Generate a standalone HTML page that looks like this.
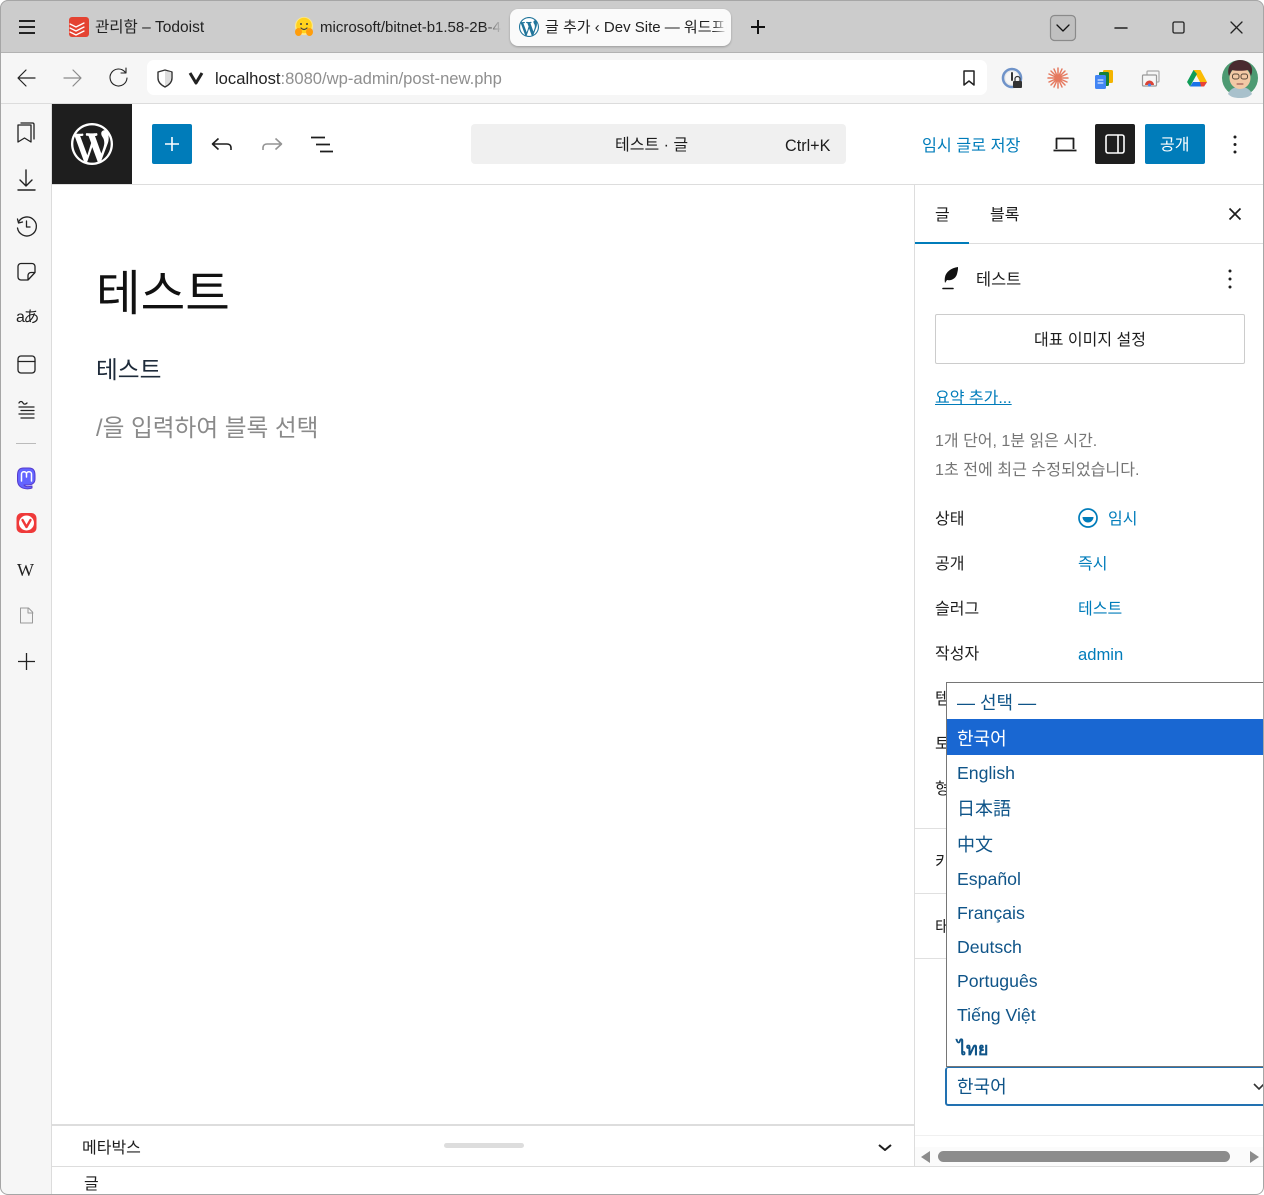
<!DOCTYPE html>
<html lang="ko"><head><meta charset="utf-8"><title>글 추가</title>
<style>
html,body{margin:0;padding:0;width:1264px;height:1195px;overflow:hidden;background:#fff}
body{position:relative;font-family:"Liberation Sans","Noto Sans CJK KR",sans-serif;color:#1e1e1e;font-size:16px}
.b{position:absolute}
.t{position:absolute;white-space:nowrap;line-height:20px;height:20px}
.blue{color:#007cba}
svg.i{position:absolute;left:0;top:0;width:1264px;height:1195px}
.o{position:absolute;left:10px;white-space:nowrap;line-height:20px;font-size:18px;color:#0f5488}
.l{font-size:17.700px}
</style></head><body>
<!-- chrome -->
<div class="b" style="left:0;top:0;width:1264px;height:52px;background:#ccc"></div>
<div class="b" style="left:0;top:52px;width:1264px;height:1px;background:#b2b2b2"></div>
<div class="b" style="left:0;top:53px;width:1264px;height:50px;background:#f6f6f6"></div>
<div class="b" style="left:0;top:103px;width:1264px;height:1px;background:#dcdcdc"></div>
<div class="b" style="left:147px;top:60px;width:840px;height:35px;background:#fff;border-radius:7px"></div>
<div class="b" style="left:510px;top:9px;width:221px;height:37px;background:#fafafa;border-radius:8px;box-shadow:0 1px 2px rgba(0,0,0,.25)"></div>
<!-- left panel -->
<div class="b" style="left:0;top:104px;width:51px;height:1091px;background:#f6f6f6"></div>
<div class="b" style="left:51px;top:104px;width:1px;height:1091px;background:#dcdcdc"></div>
<div class="b" style="left:16px;top:443px;width:20px;height:1px;background:#bbb"></div>
<!-- WP header -->
<div class="b" style="left:52px;top:104px;width:80px;height:80px;background:#1e1e1e"></div>
<div class="b" style="left:52px;top:184px;width:1212px;height:1px;background:#ddd"></div>
<div class="b" style="left:152px;top:124px;width:40px;height:40px;background:#007cba;border-radius:2px"></div>
<div class="b" style="left:471px;top:124px;width:375px;height:40px;background:#f0f0f0;border-radius:4px"></div>
<div class="b" style="left:1095px;top:124px;width:40px;height:40px;background:#1e1e1e;border-radius:2px"></div>
<div class="b" style="left:1145px;top:124px;width:60px;height:40px;background:#007cba;border-radius:2px"></div>
<!-- sidebar lines -->
<div class="b" style="left:914px;top:185px;width:1px;height:981px;background:#ddd"></div>
<div class="b" style="left:915px;top:243px;width:349px;height:1px;background:#ddd"></div>
<div class="b" style="left:915px;top:242px;width:54px;height:2px;background:#007cba"></div>
<div class="b" style="left:935px;top:314px;width:308px;height:48px;border:1px solid #ccc;border-radius:2px"></div>
<div class="b" style="left:915px;top:828px;width:349px;height:1px;background:#e0e0e0"></div>
<div class="b" style="left:915px;top:893px;width:349px;height:1px;background:#e0e0e0"></div>
<div class="b" style="left:915px;top:958px;width:349px;height:1px;background:#e0e0e0"></div>
<div class="b" style="left:915px;top:1135px;width:349px;height:1px;background:#f0f0f0"></div>
<div class="b" style="left:915px;top:1147px;width:349px;height:19px;background:#fbfbfb"></div>
<div class="b" style="left:938px;top:1151px;width:292px;height:11px;background:#8c8c8c;border-radius:6px"></div>
<!-- bottom -->
<div class="b" style="left:52px;top:1124px;width:862px;height:2px;background:#ddd"></div>
<div class="b" style="left:52px;top:1166px;width:1212px;height:1px;background:#ddd"></div>
<div class="b" style="left:444px;top:1143px;width:80px;height:5px;background:#ddd;border-radius:3px"></div>

<svg class="i" viewBox="0 0 1264 1195" xmlns="http://www.w3.org/2000/svg" fill="none" stroke-linecap="round" stroke-linejoin="round">
<!-- hamburger -->
<path d="M19 21h16M19 27h16M19 33h16" stroke="#222" stroke-width="2" stroke-linecap="butt"/>
<!-- todoist -->
<rect x="69" y="17" width="20" height="20" rx="3" fill="#e44332"/>
<path d="M70 24l6 3 8-4M70 28l6 3 8-4M70 32l6 3 8-4" stroke="#fff" stroke-width="1.300"/>
<!-- hugging face -->
<circle cx="304" cy="26" r="9" fill="#ffe98a"/>
<circle cx="304" cy="25.500" r="7.800" fill="#ffd21e"/>
<ellipse cx="298.500" cy="32" rx="3.500" ry="4" fill="#ff9d0b"/><ellipse cx="309.500" cy="32" rx="3.500" ry="4" fill="#ff9d0b"/>
<circle cx="301" cy="24" r="1" fill="#3a3b45"/><circle cx="307" cy="24" r="1" fill="#3a3b45"/>
<path d="M301 28c2 2 4 2 6 0" stroke="#3a3b45" stroke-width="1.200"/>
<!-- wp favicon -->
<g transform="translate(519 17)"><circle cx="10" cy="10" r="10" fill="#fff"/><path fill="#21759b" d="M20 10c0-5.510-4.490-10-10-10C4.480 0 0 4.490 0 10c0 5.520 4.480 10 10 10 5.510 0 10-4.480 10-10zM7.780 15.370L4.370 6.220c.55-.02 1.170-.08 1.170-.08.5-.06.44-1.130-.06-1.110 0 0-1.450.11-2.370.11-.18 0-.37 0-.58-.01C4.120 2.690 6.870 1.110 10 1.110c2.330 0 4.450.87 6.050 2.340-.68-.11-1.650.39-1.650 1.580 0 .74.45 1.360.9 2.100.35.61.55 1.360.55 2.460 0 1.490-1.400 5-1.400 5l-3.030-8.370c.54-.02.82-.17.82-.17.5-.05.44-1.250-.06-1.220 0 0-1.440.12-2.380.12-.87 0-2.330-.12-2.330-.12-.5-.03-.56 1.200-.06 1.220l.92.08 1.260 3.410zM17.410 10c.24-.64.74-1.870.43-4.250.7 1.290 1.050 2.710 1.050 4.250 0 3.290-1.730 6.240-4.400 7.780.97-2.590 1.940-5.200 2.920-7.780zM6.100 18.090C3.120 16.650 1.110 13.530 1.110 10c0-1.300.23-2.480.72-3.590C3.250 10.300 4.670 14.200 6.100 18.090zm4.030-6.630l2.580 6.980c-.86.29-1.760.45-2.710.45-.79 0-1.570-.11-2.290-.33.81-2.380 1.620-4.740 2.420-7.100z"/></g>
<!-- new tab -->
<path d="M758 20v14M751 27h14" stroke="#111" stroke-width="2" stroke-linecap="butt"/>
<!-- tab list -->
<rect x="1050.500" y="15.500" width="25" height="25" rx="4" fill="#c0c0c0" stroke="#8a8a8a" stroke-width="1.200"/>
<path d="M1057 25l6 6 6-6" stroke="#111" stroke-width="1.300"/>
<!-- window buttons -->
<path d="M1115 28h12" stroke="#222" stroke-width="1.500"/>
<rect x="1173" y="22" width="11" height="11" rx="1.500" stroke="#222" stroke-width="1.300"/>
<path d="M1231 22l11 11M1242 22l-11 11" stroke="#222" stroke-width="1.300"/>
<!-- nav -->
<path d="M35 78H19M26 70l-8 8 8 8" stroke="#222" stroke-width="1.200"/>
<path d="M64 78h16M73 70l8 8-8 8" stroke="#8a8a8a" stroke-width="1.200"/>
<path d="M125 72a8.500 8.500 0 1 0 2 6M126 68v5h-5" stroke="#222" stroke-width="1.100"/>
<path d="M165 70l7 2v6c0 4-3 7-7 9-4-2-7-5-7-9v-6z" stroke="#333" stroke-width="1.400"/>
<path d="M165 71v15c3-2 6-4 6-8v-6z" fill="#ddd"/>
<path d="M190 73l6 10 6-10" stroke="#222" stroke-width="3" stroke-linecap="butt"/>
<!-- bookmark -->
<path d="M964 71h10v14l-5-4-5 4z" stroke="#222" stroke-width="1.500"/>
<!-- extension 1password-like -->
<circle cx="1012" cy="78" r="9" stroke="#6f93c9" stroke-width="2.600"/>
<circle cx="1012" cy="78" r="7" stroke="#e8e8e8" stroke-width="1"/>
<path d="M1012 73v7" stroke="#333" stroke-width="2"/>
<rect x="1013" y="81" width="9" height="7" rx="1" fill="#333"/><path d="M1015 81v-2a2.500 2.500 0 0 1 5 0v2" stroke="#333" stroke-width="1.200"/>
<!-- claude star -->
<path d="M1058 68v20M1048 78h20M1051 71l14 14M1065 71l-14 14M1054 69l8 18M1062 69l-8 18M1049 74l18 8M1067 74l-18 8" stroke="#e5795f" stroke-width="1.500"/>
<!-- docs -->
<rect x="1103" y="70" width="10" height="13" rx="1.500" fill="#f4b400"/>
<rect x="1099" y="72" width="10" height="14" rx="1.500" fill="#188038"/>
<rect x="1095" y="75" width="11" height="14" rx="1.500" fill="#4285f4"/>
<path d="M1098 80h5M1098 83h5" stroke="#fff" stroke-width="1"/>
<!-- tab chrome -->
<rect x="1147" y="71" width="12" height="11" rx="1" stroke="#aaa" stroke-width="1.200"/>
<rect x="1142.500" y="75" width="14" height="11" rx="1" fill="#f6f6f6" stroke="#999" stroke-width="1.200"/>
<path d="M1145 85a4.500 4.500 0 0 1 9 0z" fill="#db4437"/><circle cx="1149.500" cy="85" r="1.500" fill="#4285f4"/>
<!-- drive -->
<path d="M1193.500 70h7l6.500 12h-7z" fill="#fbbc04"/><path d="M1193.500 70l-6.500 12 3 4.500 7-12.500z" fill="#0f9d58"/><path d="M1193 82h14l-3 4.500h-14z" fill="#1a73e8"/><path d="M1200 82h7l-3 4.500h-3z" fill="#ea4335"/>
<!-- avatar -->
<circle cx="1240" cy="78" r="18" fill="#4d9a72"/>
<path d="M1228 94c2-5 6-7 12-7s10 2 12 7c-3 3-6 4-12 4s-9-1-12-4z" fill="#a9c1cc"/>
<ellipse cx="1240" cy="78" rx="10.500" ry="11" fill="#f3c9a5"/>
<path d="M1229 76c-3-9 3-16 11-16s15 6 11 16c-1-3-2-5-3-6-5 1-12 1-16 0-1 2-2 4-3 6z" fill="#4a2b2f"/>
<rect x="1232.500" y="74" width="6.500" height="5" rx="2" stroke="#5b4a3a" stroke-width="1"/><rect x="1241" y="74" width="6.500" height="5" rx="2" stroke="#5b4a3a" stroke-width="1"/>
<path d="M1237 84h6" stroke="#844" stroke-width="1"/>
<!-- left panel icons -->
<g stroke="#222" stroke-width="1.300">
<path d="M18 125h13v17l-6.500-4-6.500 4zM21 123h11.500c1 0 1.500.5 1.500 1.500V139"/>
<path d="M26 170v16M20 180l6 6 6-6M18 190h17" stroke-width="1.400"/>
<path d="M18.500 222a9.500 9.500 0 1 1-1 6M17.500 219l1 4 4-1M26.500 221v6h3.500"/>
<path d="M21 263.500h11a3 3 0 0 1 3 3v6l-7 7.500h-7a3 3 0 0 1-3-3v-10.500a3 3 0 0 1 3-3zM35 272.500h-4a3 3 0 0 0-3 3v4.500"/>
<rect x="18" y="356" width="17" height="17" rx="3"/><path d="M18 361.500h17"/>
<path d="M19 403c1-2 3-2 4 0s3 1 4 0M19 407h15M21 410.500h13M19 414h15M21 418h13"/>
</g>
<!-- mastodon -->
<path d="M17.500 475c0-5 2.500-7 6-7h5.500c3.500 0 6 2 6 7v4c0 4-3 6-7 6h-4c1 2 4 2 8 1v2c-3 1.500-14.500 2-14.500-8z" fill="#6364ff" stroke="#563acc" stroke-width="1"/>
<path d="M21.500 481v-7c0-3 5-3 5 0v3M26.500 477v-3c0-3 5-3 5 0v7" stroke="#fff" stroke-width="1.500"/>
<!-- vivaldi -->
<rect x="16.500" y="513" width="20" height="20" rx="5" fill="#ef3939"/>
<circle cx="26.500" cy="523" r="7.500" fill="#fff"/>
<path d="M22.500 520l4 7 4-7" stroke="#ef3939" stroke-width="2.400"/>
<!-- page -->
<path d="M20.500 608h8l4 4v11h-12z" fill="#f4f4f4" stroke="#999" stroke-width="1"/><path d="M28 608v5h5" stroke="#999"/>
<!-- add -->
<path d="M26.500 653v17M18 661.500h17" stroke="#222" stroke-width="1.300" stroke-linecap="butt"/>
<!-- WP logo -->
<g transform="translate(71 123) scale(2.1)"><path fill="#fff" d="M20 10c0-5.510-4.490-10-10-10C4.480 0 0 4.490 0 10c0 5.520 4.480 10 10 10 5.510 0 10-4.480 10-10zM7.780 15.370L4.370 6.220c.55-.02 1.170-.08 1.170-.08.5-.06.44-1.130-.06-1.110 0 0-1.450.11-2.370.11-.18 0-.37 0-.58-.01C4.120 2.690 6.870 1.110 10 1.110c2.330 0 4.450.87 6.050 2.340-.68-.11-1.650.39-1.650 1.580 0 .74.45 1.360.9 2.100.35.61.55 1.360.55 2.460 0 1.490-1.400 5-1.400 5l-3.030-8.370c.54-.02.82-.17.82-.17.5-.05.44-1.250-.06-1.220 0 0-1.440.12-2.380.12-.87 0-2.330-.12-2.330-.12-.5-.03-.56 1.200-.06 1.220l.92.08 1.260 3.410zM17.410 10c.24-.64.74-1.870.43-4.250.7 1.290 1.050 2.710 1.050 4.250 0 3.290-1.730 6.240-4.400 7.780.97-2.590 1.940-5.200 2.920-7.780zM6.100 18.090C3.120 16.650 1.110 13.530 1.110 10c0-1.300.23-2.480.72-3.590C3.250 10.300 4.670 14.200 6.100 18.090zm4.030-6.630l2.580 6.980c-.86.29-1.760.45-2.710.45-.79 0-1.570-.11-2.290-.33.81-2.380 1.620-4.740 2.420-7.100z"/></g>
<!-- header icons -->
<path d="M172 137v14M165 144h14" stroke="#fff" stroke-width="1.600" stroke-linecap="butt"/>
<path d="M231 150v-2c0-3-2-4-4-4h-14M218.500 138.500l-6 5.500 6 5.500" stroke="#1e1e1e" stroke-width="1.600" stroke-linecap="butt"/>
<path d="M263 150v-2c0-3 2-4 4-4h14M275.500 138.500l6 5.500-6 5.500" stroke="#949494" stroke-width="1.600" stroke-linecap="butt"/>
<path d="M311 137.500h14M316 144.500h14M320 151.500h13" stroke="#1e1e1e" stroke-width="1.700" stroke-linecap="butt"/>
<path d="M1056.500 149v-10.500h17V149M1053.500 150.500h23" stroke="#1e1e1e" stroke-width="1.800" stroke-linecap="butt"/>
<rect x="1106" y="135" width="18" height="18" rx="2" stroke="#fff" stroke-width="1.600"/><path d="M1118 135v18" stroke="#fff" stroke-width="1.600" stroke-linecap="butt"/>
<circle cx="1235" cy="137" r="1.500" fill="#1e1e1e"/><circle cx="1235" cy="144.500" r="1.500" fill="#1e1e1e"/><circle cx="1235" cy="152" r="1.500" fill="#1e1e1e"/>
<!-- sidebar icons -->
<path d="M1229.500 208.500l11 11M1240.500 208.500l-11 11" stroke="#1e1e1e" stroke-width="1.700" stroke-linecap="butt"/>
<path d="M958 267c-7 1-12 5-13 10-.4 2-.4 4 0 6l2-3c5 1 9-2 10-6 .6-2.500 1.200-4.500 1-7z" fill="#111"/>
<path d="M943 288.500h10" stroke="#111" stroke-width="1.600"/>
<circle cx="1230" cy="271" r="1.500" fill="#1e1e1e"/><circle cx="1230" cy="279" r="1.500" fill="#1e1e1e"/><circle cx="1230" cy="287" r="1.500" fill="#1e1e1e"/>
<circle cx="1088" cy="518" r="9" stroke="#007cba" stroke-width="1.700"/>
<path d="M1082.500 517h11a5.500 5.500 0 0 1-11 0z" fill="#007cba"/>
<!-- bottom -->
<path d="M879 1145l6 5 6-5" stroke="#1e1e1e" stroke-width="2" stroke-linecap="butt"/>
<path d="M930 1151v12l-9-6z" fill="#8c8c8c"/>
<path d="M1250 1151v12l9-6z" fill="#8c8c8c"/>
</svg>

<!-- left panel text icons -->
<div class="t" style="left:16px;top:308px;font-size:16px;letter-spacing:-1.500px;color:#222">aあ</div>
<div class="t" style="left:17px;top:560px;font-family:'Liberation Serif',serif;font-size:18px;color:#222">W</div>
<!-- chrome text -->
<div class="t" style="left:95px;top:18px;font-size:15.500px;color:#222">관리함 – Todoist</div>
<div class="t" style="left:320px;top:18px;width:182px;overflow:hidden;font-size:15px;color:#222;-webkit-mask-image:linear-gradient(90deg,#000 90%,transparent)">microsoft/bitnet-b1.58-2B-4</div>
<div class="t" style="left:545px;top:18px;width:182px;overflow:hidden;font-size:15px;color:#222;-webkit-mask-image:linear-gradient(90deg,#000 92%,transparent)">글 추가 ‹ Dev Site — 워드프레스</div>
<div class="t" style="left:215px;top:69px;font-size:16.600px;color:#222">localhost<span style="color:#8f8f8f">:8080/wp-admin/post-new.php</span></div>
<!-- header text -->
<div class="t" style="left:615px;top:136px;font-size:16px">테스트 · 글</div>
<div class="t" style="left:785px;top:136px;font-size:16.200px">Ctrl+K</div>
<div class="t blue" style="left:922px;top:136px;font-size:16.200px">임시 글로 저장</div>
<div class="t" style="left:1160px;top:136px;font-size:16px;color:#fff">공개</div>
<!-- editor -->
<div class="t" style="left:96px;top:264px;height:60px;line-height:60px;font-size:48.500px;color:#111">테스트</div>
<div class="t" style="left:96px;top:356px;height:30px;line-height:30px;font-size:23.700px;color:#1e2b3a">테스트</div>
<div class="t" style="left:96px;top:414px;height:30px;line-height:30px;font-size:23.700px;color:#8a8a8a">/을 입력하여 블록 선택</div>
<!-- sidebar text -->
<div class="t" style="left:935px;top:206px;font-size:16px">글</div>
<div class="t" style="left:990px;top:206px;font-size:16px">블록</div>
<div class="t" style="left:976px;top:270px;font-size:16.400px">테스트</div>
<div class="t" style="left:1034px;top:331px;font-size:16px">대표 이미지 설정</div>
<div class="t blue" style="left:935px;top:389px;font-size:16px;text-decoration:underline">요약 추가...</div>
<div class="t" style="left:935px;top:432px;font-size:16px;color:#757575">1개 단어, 1분 읽은 시간.</div>
<div class="t" style="left:935px;top:460px;font-size:16.100px;color:#757575">1초 전에 최근 수정되었습니다.</div>
<div class="t" style="left:935px;top:510px;font-size:16px">상태</div>
<div class="t blue" style="left:1108px;top:510px;font-size:16px">임시</div>
<div class="t" style="left:935px;top:555px;font-size:16px">공개</div>
<div class="t blue" style="left:1078px;top:555px;font-size:16px">즉시</div>
<div class="t" style="left:935px;top:600px;font-size:16px">슬러그</div>
<div class="t blue" style="left:1078px;top:600px;font-size:16px">테스트</div>
<div class="t" style="left:935px;top:645px;font-size:16px">작성자</div>
<div class="t blue" style="left:1078px;top:645px;font-size:16.600px">admin</div>
<div class="t" style="left:935px;top:690px;font-size:16px">템플릿</div>
<div class="t" style="left:935px;top:735px;font-size:16px">토론</div>
<div class="t" style="left:935px;top:780px;font-size:16px">형식</div>
<div class="t" style="left:935px;top:853px;font-size:16px">키워드</div>
<div class="t" style="left:935px;top:918px;font-size:16px">태그</div>
<div class="t" style="left:82px;top:1139px;font-size:16px">메타박스</div>
<div class="t" style="left:84px;top:1175px;font-size:16px">글</div>

<!-- select -->
<div class="b" style="left:945px;top:1067px;width:330px;height:36px;border:1px solid #2271b1;border-bottom-width:2px;border-left-width:2px;border-radius:3px;background:#fff;box-sizing:content-box">
<div class="o" style="top:9px;left:10px">한국어</div>
<svg style="position:absolute;left:306px;top:14px" width="12" height="10" fill="none"><path d="M1 2l5 5 5-5" stroke="#333" stroke-width="1.600"/></svg>
</div>
<!-- dropdown -->
<div class="b" style="left:946px;top:682px;width:330px;height:383px;background:#fff;border:1px solid #767676;overflow:hidden">
<div class="b" style="left:0;top:36px;width:330px;height:36px;background:#1967d2"></div>
<div class="o" style="top:10px">— 선택 —</div>
<div class="o" style="top:46px;color:#fff">한국어</div>
<div class="o l" style="top:80px">English</div>
<div class="o" style="top:116px">日本語</div>
<div class="o" style="top:152px">中文</div>
<div class="o l" style="top:186px">Español</div>
<div class="o l" style="top:220px">Français</div>
<div class="o l" style="top:254px">Deutsch</div>
<div class="o l" style="top:288px">Português</div>
<div class="o l" style="top:322px">Tiếng Việt</div>
<div class="o" style="top:356px;font-weight:bold">ไทย</div>
</div>
<!-- window frame -->
<div class="b" style="left:0;top:0;width:1262px;height:1193px;border:1px solid #a6a6a6;border-radius:8px;pointer-events:none;box-shadow:0 0 0 6px #fff"></div>
</body></html>
